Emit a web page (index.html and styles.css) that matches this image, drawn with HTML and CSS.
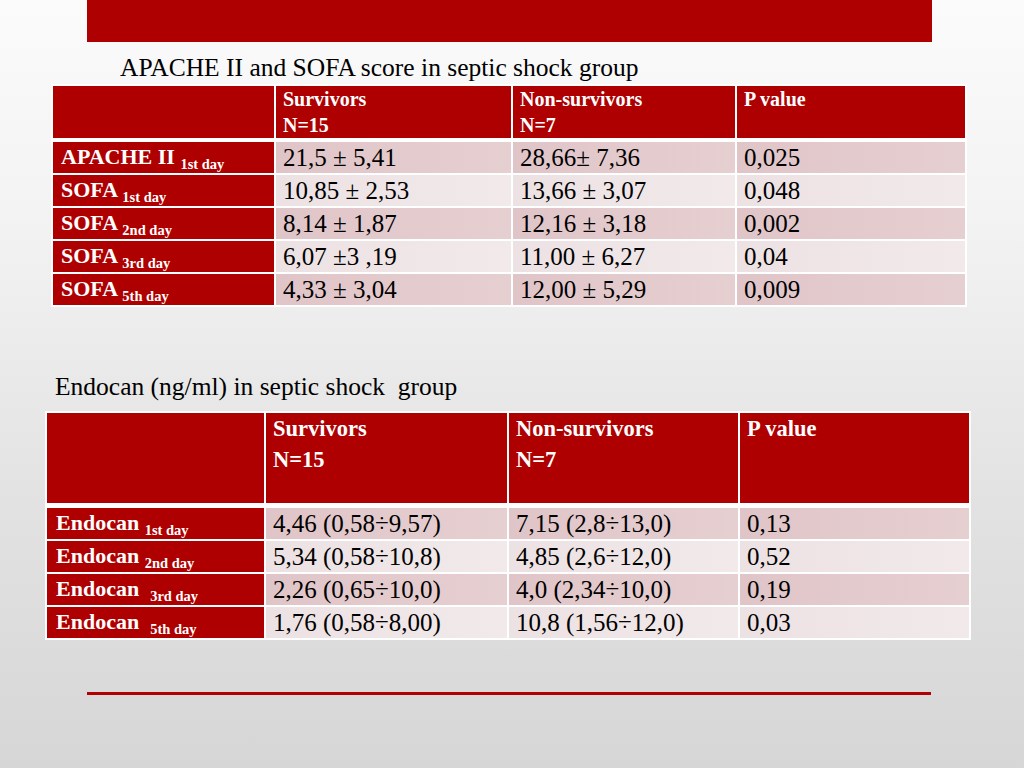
FILE: index.html
```html
<!DOCTYPE html>
<html lang="en">
<head>
<meta charset="utf-8">
<title>APACHE II, SOFA and Endocan in septic shock</title>
<link rel="stylesheet" href="styles.css">
</head>
<body>
<div class="slide">
  <div class="top-bar"></div>

  <h2 class="title title-1">APACHE II and SOFA score in septic shock group</h2>
  <table class="grid grid-1">
    <colgroup>
      <col class="c1"><col class="c2"><col class="c3"><col class="c4">
    </colgroup>
    <thead>
      <tr>
        <th></th>
        <th>Survivors<br>N=15</th>
        <th>Non-survivors<br>N=7</th>
        <th>P value</th>
      </tr>
    </thead>
    <tbody>
      <tr class="pink">
        <th>APACHE II <sub>1st day</sub></th>
        <td>21,5 ± 5,41</td><td>28,66± 7,36</td><td>0,025</td>
      </tr>
      <tr class="light">
        <th>SOFA <sub>1st day</sub></th>
        <td>10,85 ± 2,53</td><td>13,66 ± 3,07</td><td>0,048</td>
      </tr>
      <tr class="pink">
        <th>SOFA <sub>2nd day</sub></th>
        <td>8,14 ± 1,87</td><td>12,16 ± 3,18</td><td>0,002</td>
      </tr>
      <tr class="light">
        <th>SOFA <sub>3rd day</sub></th>
        <td>6,07 ±3 ,19</td><td>11,00 ± 6,27</td><td>0,04</td>
      </tr>
      <tr class="pink">
        <th>SOFA <sub>5th day</sub></th>
        <td>4,33 ± 3,04</td><td>12,00 ± 5,29</td><td>0,009</td>
      </tr>
    </tbody>
  </table>

  <h2 class="title title-2">Endocan (ng/ml) in septic shock&nbsp; group</h2>
  <table class="grid grid-2">
    <colgroup>
      <col class="c1"><col class="c2"><col class="c3"><col class="c4">
    </colgroup>
    <thead>
      <tr>
        <th></th>
        <th>Survivors<br>N=15</th>
        <th>Non-survivors<br>N=7</th>
        <th>P value</th>
      </tr>
    </thead>
    <tbody>
      <tr class="pink">
        <th>Endocan <sub>1st day</sub></th>
        <td>4,46 (0,58÷9,57)</td><td>7,15 (2,8÷13,0)</td><td>0,13</td>
      </tr>
      <tr class="light">
        <th>Endocan <sub>2nd day</sub></th>
        <td>5,34 (0,58÷10,8)</td><td>4,85 (2,6÷12,0)</td><td>0,52</td>
      </tr>
      <tr class="pink">
        <th>Endocan &nbsp;<sub>3rd day</sub></th>
        <td>2,26 (0,65÷10,0)</td><td>4,0 (2,34÷10,0)</td><td>0,19</td>
      </tr>
      <tr class="light">
        <th>Endocan &nbsp;<sub>5th day</sub></th>
        <td>1,76 (0,58÷8,00)</td><td>10,8 (1,56÷12,0)</td><td>0,03</td>
      </tr>
    </tbody>
  </table>

  <div class="bottom-line"></div>
</div>
</body>
</html>
```
FILE: styles.css
```css
html, body {
  margin: 0;
  padding: 0;
}

body {
  width: 1024px;
  height: 768px;
  overflow: hidden;
  font-family: "Liberation Serif", "Times New Roman", serif;
  color: #000;
  background: linear-gradient(to bottom, #fbfbfb 0%, #f2f2f2 30%, #e2e2e2 65%, #d6d6d6 100%);
}

.slide {
  display: flex;
  flex-direction: column;
  align-items: flex-start;
  width: 1024px;
  height: 768px;
}

.top-bar {
  width: 845px;
  height: 42px;
  margin-left: 87px;
  background: #ae0000;
}

.title {
  margin: 0;
  font-weight: normal;
  font-size: 25.5px;
  line-height: 30px;
  height: 30px;
  white-space: nowrap;
}

.title-1 {
  margin: 11px 0 1px 120px;
}

.title-2 {
  margin: 65px 0 9px 55px;
}

.grid {
  border-collapse: separate;
  border-spacing: 2px;
  background: #ffffff;
  table-layout: fixed;
}

.grid th,
.grid td {
  box-sizing: border-box;
  padding: 0 0 0 7px;
  text-align: left;
  vertical-align: top;
  white-space: nowrap;
  overflow: hidden;
}

.grid thead th {
  background: #ae0000;
  color: #fff;
  font-weight: bold;
  border-bottom: 2px solid #fff;
}

.grid tbody th {
  background: #ae0000;
  color: #fff;
  font-weight: bold;
  font-size: 22px;
  line-height: 30px;
  height: 31px;
  padding-left: 8px;
}

.grid tbody td {
  font-size: 25px;
  line-height: 30px;
  height: 31px;
  padding-top: 1px;
}

.grid sub {
  font-size: 14.5px;
  line-height: 0;
  vertical-align: -5px;
}

.grid .pink td {
  background: linear-gradient(to right, #e0c5c8, #e6cfd1);
}

.grid .light td {
  background: linear-gradient(to right, #ede2e3, #f1e9ea);
}

/* table 1 */
.grid-1 {
  margin-left: 51px;
  width: 916px;
}

.grid-1 .c1 { width: 221px; }
.grid-1 .c2 { width: 235px; }
.grid-1 .c3 { width: 222px; }
.grid-1 .c4 { width: 228px; }

.grid-1 thead th {
  height: 53px;
  font-size: 20px;
  line-height: 26px;
}

/* table 2 */
.grid-2 {
  margin-left: 45px;
  width: 926px;
}

.grid-2 .c1 { width: 217px; }
.grid-2 .c2 { width: 241px; }
.grid-2 .c3 { width: 229px; }
.grid-2 .c4 { width: 229px; }

.grid-2 thead th {
  height: 93px;
  font-size: 22.5px;
  line-height: 31px;
  border-bottom-width: 3px;
}

.grid-2 tbody th {
  padding-left: 9px;
  line-height: 29px;
}

.bottom-line {
  width: 844px;
  height: 3px;
  margin: 52px 0 0 87px;
  background: #b00000;
}
```
